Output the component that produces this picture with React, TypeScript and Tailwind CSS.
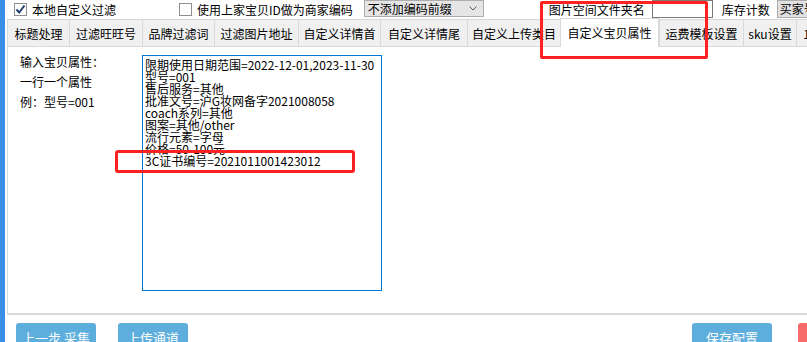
import React from 'react';

const tabs: { label: string; w: string; active?: boolean }[] = [
  { label: '标题处理', w: 'w-[62px]' },
  { label: '过滤旺旺号', w: 'w-[73px]' },
  { label: '品牌过滤词', w: 'w-[72px]' },
  { label: '过滤图片地址', w: 'w-[84px]' },
  { label: '自定义详情首', w: 'w-[82px]' },
  { label: '自定义详情尾', w: 'w-[87px]' },
  { label: '自定义上传类目', w: 'w-[93px]' },
  { label: '自定义宝贝属性', w: 'w-[99px]', active: true },
  { label: '运费模板设置', w: 'w-[84px]' },
  { label: 'sku设置', w: 'w-[53px]' },
  { label: '1', w: 'w-[20px]' },
];

const attrLines = [
  '限期使用日期范围=2022-12-01,2023-11-30',
  '型号=001',
  '售后服务=其他',
  '批准文号=沪G妆网备字2021008058',
  'coach系列=其他',
  '图案=其他/other',
  '流行元素=字母',
  '价格=50-100元',
  '3C证书编号=2021011001423012',
];

const Checkbox = ({ checked }: { checked?: boolean }) => (
  <span className="w-[13px] h-[13px] border border-[#8f8f8f] bg-white flex items-center justify-center shrink-0">
    {checked && (
      <svg width="11" height="11" viewBox="0 0 11 11">
        <path d="M1.5 5.5 L4.2 8.5 L9.5 1.5" fill="none" stroke="#1f3f6e" strokeWidth="2" />
      </svg>
    )}
  </span>
);

export default function App() {
  return (
    <div
      className="relative w-[807px] h-[342px] overflow-hidden bg-white flex text-[12px] text-black"
      style={{ fontFamily: '"Noto Sans CJK SC", "Liberation Sans", sans-serif' }}
    >
      {/* left accent strip */}
      <div className="w-[5px] h-full bg-[#3a8de9] shrink-0" />

      <div className="flex-1 flex flex-col pl-[2px]">
        {/* top options row */}
        <div className="h-[19px] shrink-0 flex items-center leading-none whitespace-nowrap">
          <div className="ml-[7px] flex items-center gap-[5px]">
            <Checkbox checked />
            <span>本地自定义过滤</span>
          </div>
          <div className="ml-[63px] flex items-center gap-[5px]">
            <Checkbox />
            <span>使用上家宝贝ID做为商家编码</span>
          </div>
          <div className="ml-[11px] -mt-[2px] w-[120px] h-[17px] shrink-0 bg-[#e5e5e5] border border-[#acacac] flex items-center justify-between pl-[3px] pr-[6px]">
            <span>不添加编码前缀</span>
            <svg width="8" height="5" viewBox="0 0 8 5">
              <path d="M0.5 0.5 L4 4 L7.5 0.5" fill="none" stroke="#555" strokeWidth="1" />
            </svg>
          </div>
          <span className="ml-[65px]">图片空间文件夹名</span>
          <div className="ml-[7px] -mt-[1px] w-[61px] h-[18px] shrink-0 bg-white border border-[#7a7a7a]" />
          <span className="ml-[9px]">库存计数</span>
          <div className="ml-[7px] -mt-[1px] h-[18px] px-[2px] bg-[#e1e1e1] border border-[#adadad] flex items-center">
            买家号
          </div>
        </div>

        {/* tab strip */}
        <div className="h-[27px] shrink-0 flex items-end bg-white">
          {tabs.map((t) =>
            t.active ? (
              <div
                key={t.label}
                className={`${t.w} h-[29px] -mb-[1px] shrink-0 bg-white border-t border-x border-[#d9d9d9] flex items-center justify-center whitespace-nowrap relative z-10`}
              >
                {t.label}
              </div>
            ) : (
              <div
                key={t.label}
                className={`${t.w} h-[27px] shrink-0 bg-[#f0f0f0] border-t border-l border-[#d9d9d9] flex items-center justify-center whitespace-nowrap pt-[1px]`}
              >
                {t.label}
              </div>
            )
          )}
        </div>

        {/* tab panel */}
        <div className="h-[269px] shrink-0 border-l border-t border-b-2 border-[#d9d9d9] flex">
          <div className="w-[134px] pl-[12px] pt-[8px] flex flex-col gap-[6px] leading-[14px]">
            <span>输入宝贝属性：</span>
            <span>一行一个属性</span>
            <span>例：型号=001</span>
          </div>
          <div className="mt-[8px] w-[240px] h-[236px] border border-[#0078d7] pl-[2px] pt-[3px] leading-[12px] whitespace-nowrap overflow-hidden">
            {attrLines.map((l) => (
              <div key={l} className="h-[12px]">
                {l}
              </div>
            ))}
          </div>
        </div>

        {/* bottom buttons */}
        <div className="shrink-0 flex items-start pt-[8px]">
          <div className="ml-[9px] w-[80px] h-[30px] rounded-[3px] bg-[#5eaedd] text-white text-[13px] flex justify-center pt-[5px]">
            上一步 采集
          </div>
          <div className="ml-[22px] w-[70px] h-[30px] rounded-[3px] bg-[#5eaedd] text-white text-[13px] flex justify-center pt-[5px]">
            上传通道
          </div>
          <div className="ml-[504px] w-[80px] h-[30px] rounded-[3px] bg-[#5eaedd] text-white text-[13px] flex justify-center pt-[5px]">
            保存配置
          </div>
          <div className="ml-[26px] w-[40px] h-[30px] rounded-[3px] bg-[#f76b6b]" />
        </div>
      </div>

      {/* annotation boxes */}
      <div className="absolute left-[540px] top-[1px] w-[168px] h-[58px] border-[3px] border-[#ff2020] rounded-[2px]" />
      <div className="absolute left-[115px] top-[150px] w-[240px] h-[23px] border-[3px] border-[#ff2020] rounded-[3px]" />
    </div>
  );
}
